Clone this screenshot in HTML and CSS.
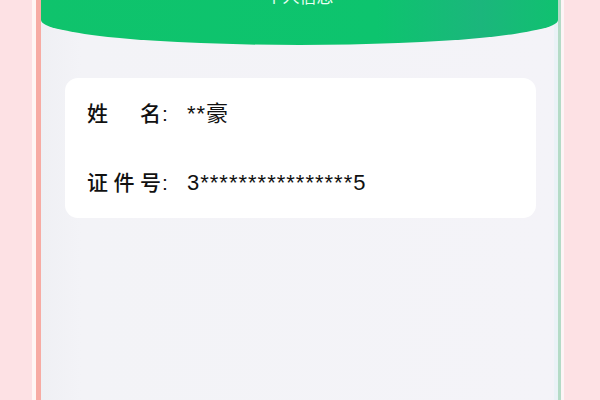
FILE: index.html
```html
<!DOCTYPE html>
<html lang="zh">
<head>
<meta charset="utf-8">
<link rel="stylesheet" href="styles.css">
</head>
<body>
<div class="page">
  <div class="frame">
    <div class="screen">
      <header class="hero">
        <div class="title">个人信息</div>
      </header>
      <section class="card">
        <div class="row">
          <div class="label"><span>姓</span><span class="c3">名</span><span class="colon">:</span></div>
          <div class="value">**豪</div>
        </div>
        <div class="row">
          <div class="label"><span>证</span><span>件</span><span>号</span><span class="colon">:</span></div>
          <div class="value">3****************5</div>
        </div>
      </section>
    </div>
  </div>
</div>
</body>
</html>
```

FILE: styles.css
```css
html, body {
  margin: 0;
  padding: 0;
  background: #fde1e4;
  height: 400px;
  overflow: hidden;
}
.page {
  display: flex;
  height: 400px;
  padding-left: 32px;
}
.frame {
  display: flex;
  height: 400px;
  border-left: 4px solid #fff6f4;
  border-right: 3px solid #fdf4f6;
}
.screen {
  width: 517px;
  height: 400px;
  border-left: 5px solid #f7aca4;
  border-right: 3px solid #b4dbc6;
  box-shadow: inset -4px 0 0 #eaf2f6;
  background: linear-gradient(90deg, #eff0f4 0px, #f3f3f7 40px, #f4f3f8 100%);
  font-family: "Liberation Sans", "Noto Sans CJK SC", sans-serif;
  color: #111;
}
.hero {
  height: 45px;
  background: linear-gradient(90deg, #0fc36c 0%, #0dc46e 65%, #1bb67c 85%, #10c170 100%);
  border-radius: 0 0 50% 50% / 0 0 25px 25px;
  display: flex;
  justify-content: center;
  overflow: hidden;
}
.title {
  color: #e8fff2;
  font-size: 17px;
  line-height: 17px;
  margin-top: -13px;
  font-family: "Noto Sans CJK SC", sans-serif;
}
.card {
  margin: 33px 22px 0 24px;
  height: 140px;
  background: #ffffff;
  border-radius: 13px;
  display: flex;
  flex-direction: column;
  padding: 0 22px 9px;
  box-sizing: border-box;
  justify-content: center;
  gap: 45px;
}
.row {
  display: flex;
  align-items: baseline;
  height: 26px;
  font-size: 21px;
}
.label {
  width: 81px;
  display: grid;
  grid-template-columns: 26.5px 26.5px 22px 6px;
  align-items: baseline;
  font-family: "Noto Sans CJK SC", sans-serif;
  font-weight: 500;
}
.c3 {
  grid-column: 3;
}
.colon {
  grid-column: 4;
  font-family: "Liberation Sans", sans-serif;
  font-weight: 400;
}
.value {
  margin-left: 19px;
  font-size: 22px;
  letter-spacing: 1px;
}
```
